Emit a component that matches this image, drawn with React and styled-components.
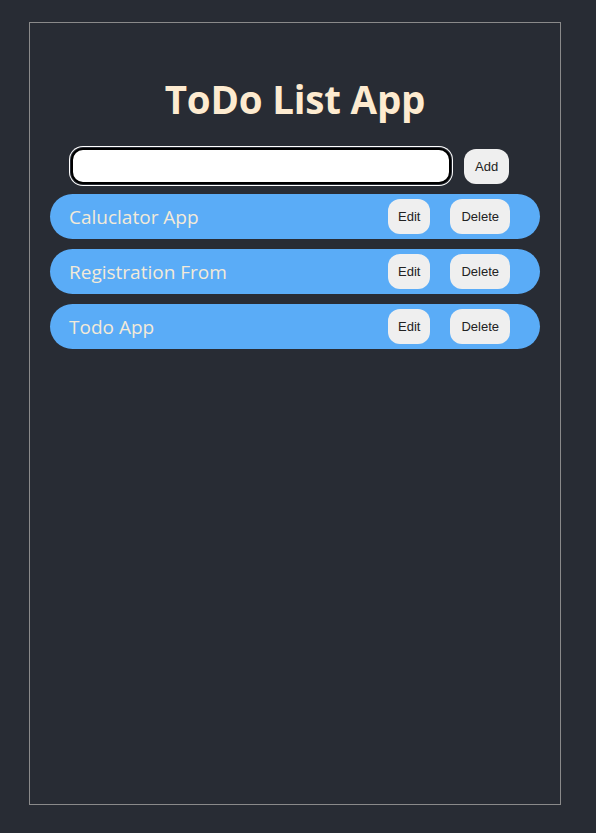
import React, { useState } from 'react';
import styled, { createGlobalStyle } from 'styled-components';

const GlobalStyle = createGlobalStyle`
  html, body {
    margin: 0;
    padding: 0;
    background: #282c34;
  }
  body {
    font-family: "Open Sans", "Noto Sans", sans-serif;
  }
`;

const Page = styled.div`
  padding: 22px 0 0 29px;
  min-height: 833px;
  box-sizing: border-box;
`;

const Card = styled.main`
  width: 532px;
  height: 783px;
  box-sizing: border-box;
  border: 1px solid #8a8a8a;
  display: flex;
  flex-direction: column;
  align-items: center;
`;

const Title = styled.h1`
  margin: 49px 0 0;
  font-size: 38.5px;
  line-height: 54px;
  font-weight: 700;
  letter-spacing: -0.2px;
  color: #fdebd0;
`;

const Form = styled.form`
  display: flex;
  align-items: center;
  gap: 13px;
  margin: 22px 0 0;
  align-self: flex-start;
  padding-left: 41px;
`;

const Field = styled.input`
  width: 380px;
  height: 36px;
  box-sizing: border-box;
  border: 2px solid #000;
  border-radius: 12px;
  background: #fff;
  box-shadow: 0 0 0 1px #282c34, 0 0 0 2px #fff;
  outline: none;
  padding: 0 10px;
  font-size: 16px;
`;

const Button = styled.button`
  font-family: "Liberation Sans", Arial, sans-serif;
  font-size: 13px;
  line-height: 15px;
  color: #222;
  background: #efefef;
  border: none;
  border-radius: 12px;
  padding: 10px ${(p) => p.$px || 11}px;
  cursor: pointer;
`;

const List = styled.ul`
  list-style: none;
  margin: 10px 0 0;
  padding: 0;
  width: 490px;
  display: flex;
  flex-direction: column;
  gap: 10px;
`;

const Item = styled.li`
  height: 45px;
  box-sizing: border-box;
  background: #5aacf7;
  border-radius: 23px;
  display: flex;
  align-items: center;
  padding: 0 30px 0 19px;
`;

const Label = styled.span`
  flex: 1;
  font-size: 19px;
  color: #f3ead8;
`;

const Actions = styled.div`
  display: flex;
  gap: 20px;
`;

export default function App() {
  const [text, setText] = useState('');
  const todos = ['Caluclator App', 'Registration From', 'Todo App'];

  return (
    <Page>
      <GlobalStyle />
      <Card>
        <Title>ToDo List App</Title>
        <Form onSubmit={(e) => e.preventDefault()}>
          <Field value={text} onChange={(e) => setText(e.target.value)} />
          <Button type="submit">Add</Button>
        </Form>
        <List>
          {todos.map((t) => (
            <Item key={t}>
              <Label>{t}</Label>
              <Actions>
                <Button $px={10}>Edit</Button>
                <Button>Delete</Button>
              </Actions>
            </Item>
          ))}
        </List>
      </Card>
    </Page>
  );
}
